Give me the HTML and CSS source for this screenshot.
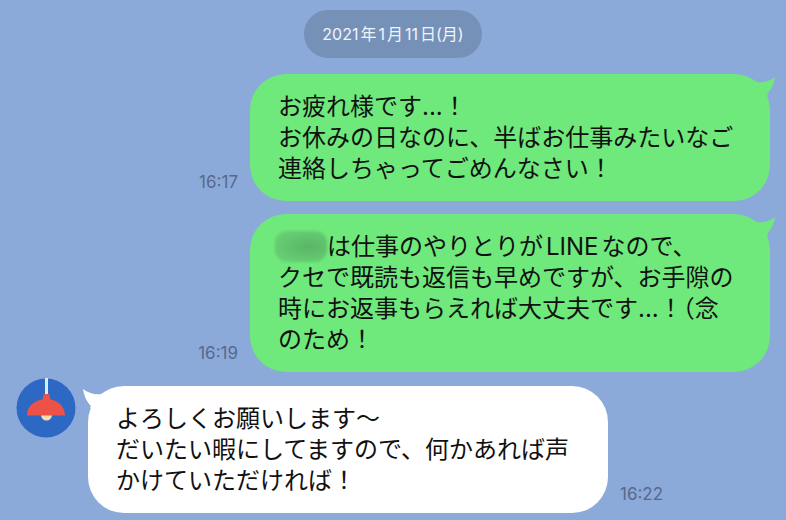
FILE: index.html
```html
<!DOCTYPE html>
<html lang="ja">
<head>
  <meta charset="utf-8" />
  <meta name="viewport" content="width=device-width, initial-scale=1">
  <title>トーク</title>
  <link rel="stylesheet" href="styles.css">
</head>
<body>

<main class="talk">
  <div class="date"><time datetime="2021-01-11">2021年1月11日(月)</time></div>

  <div class="message sent">
    <time class="time">16:17</time>
    <div class="bubble">
      <svg class="tail" width="24" height="22" viewBox="0 0 24 22" aria-hidden="true">
        <path d="M0 6 L5 8 C11 9 18 7 23 3 C22 10 19 16 15 20 L16 22 L0 22 Z" />
      </svg>
      <p>お疲れ様です...！<br>お休みの日なのに、半ばお仕事みたいなご<br>連絡しちゃってごめんなさい！</p>
    </div>
  </div>

  <div class="message sent">
    <time class="time">16:19</time>
    <div class="bubble">
      <svg class="tail" width="24" height="22" viewBox="0 0 24 22" aria-hidden="true">
        <path d="M0 6 L5 8 C11 9 18 7 23 3 C22 10 19 16 15 20 L16 22 L0 22 Z" />
      </svg>
      <p><span class="hidden-name"></span>は仕事のやりとりがLINEなので、<br>クセで既読も返信も早めですが、お手隙の<br>時にお返事もらえれば大丈夫です...！<span class="half">（</span>念<br>のため！</p>
    </div>
  </div>

  <div class="message received">
    <svg class="avatar" viewBox="0 0 60 60" aria-hidden="true">
      <circle cx="30" cy="30" r="29.5" fill="#2c68c4" />
      <path d="M29 0h3v17h-3z" fill="#d5effa" />
      <circle cx="30.5" cy="37" r="5.5" fill="#fbdcae" />
      <path d="M28.500 16h4q.8 0 1 1l1 4.500C43 23 49 29 49 37.500H11C11 29 17 23 26.500 21.500l1-4.500q.2-1 1-1z" fill="#ee5148" />
    </svg>
    <div class="bubble">
      <svg class="tail" width="24" height="22" viewBox="0 0 24 22" aria-hidden="true">
        <path d="M24 6 L19 8 C13 9 6 7 1 3 C2 10 5 16 9 20 L8 22 L24 22 Z" />
      </svg>
      <p>よろしくお願いします〜<br>だいたい暇にしてますので、何かあれば声<br>かけていただければ！</p>
    </div>
    <time class="time">16:22</time>
  </div>
</main>

</body>
</html>
```

FILE: styles.css
```css
* {
  box-sizing: border-box;
}

body {
  margin: 0;
  background: #8caad9;
  color: #111;
  font-family: Inter, "Noto Sans CJK JP", sans-serif;
  font-size: 24px;
  line-height: 31px;
  text-autospace: normal;
}

.talk {
  padding: 10px 16px 7px;
}

.date {
  width: fit-content;
  margin: 0 auto 16px;
  padding: 12px 18px;
  border-radius: 24px;
  background: #7691b8;
  color: #f0f4fb;
  font-size: 16px;
  line-height: 24px;
}

.message {
  display: flex;
  align-items: flex-end;
  gap: 12px;
  margin-top: 13px;
}

.sent {
  justify-content: flex-end;
}

.received {
  margin-top: 6px;
}

.bubble {
  position: relative;
  width: 520px;
  padding: 17px 28px;
  border-radius: 36px;
  background: #6fe87c;
}

.received .bubble {
  margin-top: 8px;
  background: #fff;
}

.bubble p {
  margin: 0;
}

.tail {
  position: absolute;
  top: 0;
  right: -6px;
  fill: #6fe87c;
}

.received .tail {
  right: auto;
  left: -6px;
  fill: #fff;
}

.time {
  color: #56698c;
}

.message .time {
  padding-bottom: 9px;
  font-size: 17px;
  line-height: 20px;
}

.avatar {
  flex: none;
  align-self: flex-start;
  width: 60px;
  height: 60px;
}

.date time {
  color: inherit;
}

.half {
  font-feature-settings: "halt";
}

/* name is blurred out */
.hidden-name {
  display: inline-block;
  width: 52px;
  height: 31px;
  margin-left: -3px;
  border-radius: 12px;
  background: radial-gradient(ellipse at 65% 50%, #5ab566, #6bd678);
  filter: blur(1px);
  vertical-align: top;
}
```
